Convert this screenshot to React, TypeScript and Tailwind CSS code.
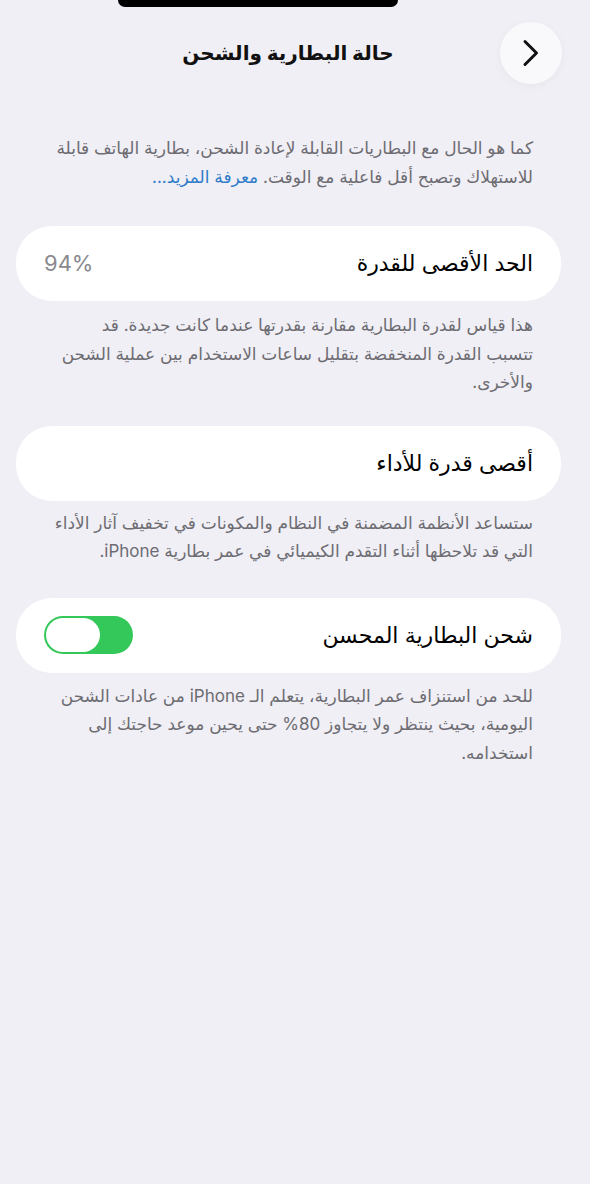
import React from "react";

const font = { fontFamily: '"Inter", "DejaVu Sans", sans-serif' };

const Caption = ({ children }: { children: React.ReactNode }) => (
  <p className="pr-[57px] pl-[40px] text-[17px] leading-[28.5px] text-[#6d6c72]">{children}</p>
);

const Card = ({ title, children }: { title: string; children?: React.ReactNode }) => (
  <div className="ml-4 mr-[29px] flex h-[75px] items-center justify-between rounded-[36px] bg-white pl-7 pr-[28px]">
    <span className="text-[22px] text-black">{title}</span>
    {children}
  </div>
);

export default function App() {
  return (
    <div dir="rtl" style={font} className="min-h-[1184px] w-[590px] bg-[#f0eff5]">
      <div dir="ltr">
        <div className="ml-[118px] h-[7px] w-[280px] rounded-b-[14px] bg-black" />
      </div>

      <div className="relative mt-[15px] flex h-[62px] items-center justify-center">
        <h1 className="-translate-x-[7px] text-[20px] font-bold text-[#111]">حالة البطارية والشحن</h1>
        <button className="absolute right-[28px] top-0 flex h-[62px] w-[62px] items-center justify-center rounded-full bg-[#f9f9fb] shadow-[0_2px_10px_rgba(0,0,0,0.04)]">
          <svg width="18" height="28" viewBox="0 0 18 28" fill="none">
            <path d="M3 2.5 L14.5 14 L3 25.5" stroke="#111" strokeWidth="3" strokeLinecap="round" strokeLinejoin="round" />
          </svg>
        </button>
      </div>

      <div className="mt-[50px]">
        <Caption>
          كما هو الحال مع البطاريات القابلة لإعادة الشحن، بطارية الهاتف قابلة
          <br />
          للاستهلاك وتصبح أقل فاعلية مع الوقت.{" "}
          <span className="text-[#2f7cc9]">معرفة المزيد...</span>
        </Caption>
      </div>

      <div className="mt-[35px]">
        <Card title="الحد الأقصى للقدرة">
          <span className="text-[22px] text-[#8a898e]">94%</span>
        </Card>
        <div className="mt-[10px]">
          <Caption>
            هذا قياس لقدرة البطارية مقارنة بقدرتها عندما كانت جديدة. قد
            <br />
            تتسبب القدرة المنخفضة بتقليل ساعات الاستخدام بين عملية الشحن
            <br />
            والأخرى.
          </Caption>
        </div>
      </div>

      <div className="mt-[29px]">
        <Card title="أقصى قدرة للأداء" />
        <div className="mt-[8px]">
          <Caption>
            ستساعد الأنظمة المضمنة في النظام والمكونات في تخفيف آثار الأداء
            <br />
            التي قد تلاحظها أثناء التقدم الكيميائي في عمر بطارية iPhone.
          </Caption>
        </div>
      </div>

      <div className="mt-[32px]">
        <Card title="شحن البطارية المحسن">
          <div className="flex h-[38px] w-[89px] items-center justify-end rounded-full bg-[#34c759] p-[2px]">
            <div className="h-[34px] w-[54px] rounded-full bg-white" />
          </div>
        </Card>
        <div className="mt-[9px]">
          <Caption>
            للحد من استنزاف عمر البطارية، يتعلم الـ iPhone من عادات الشحن
            <br />
            اليومية، بحيث ينتظر ولا يتجاوز 80% حتى يحين موعد حاجتك إلى
            <br />
            استخدامه.
          </Caption>
        </div>
      </div>
    </div>
  );
}
